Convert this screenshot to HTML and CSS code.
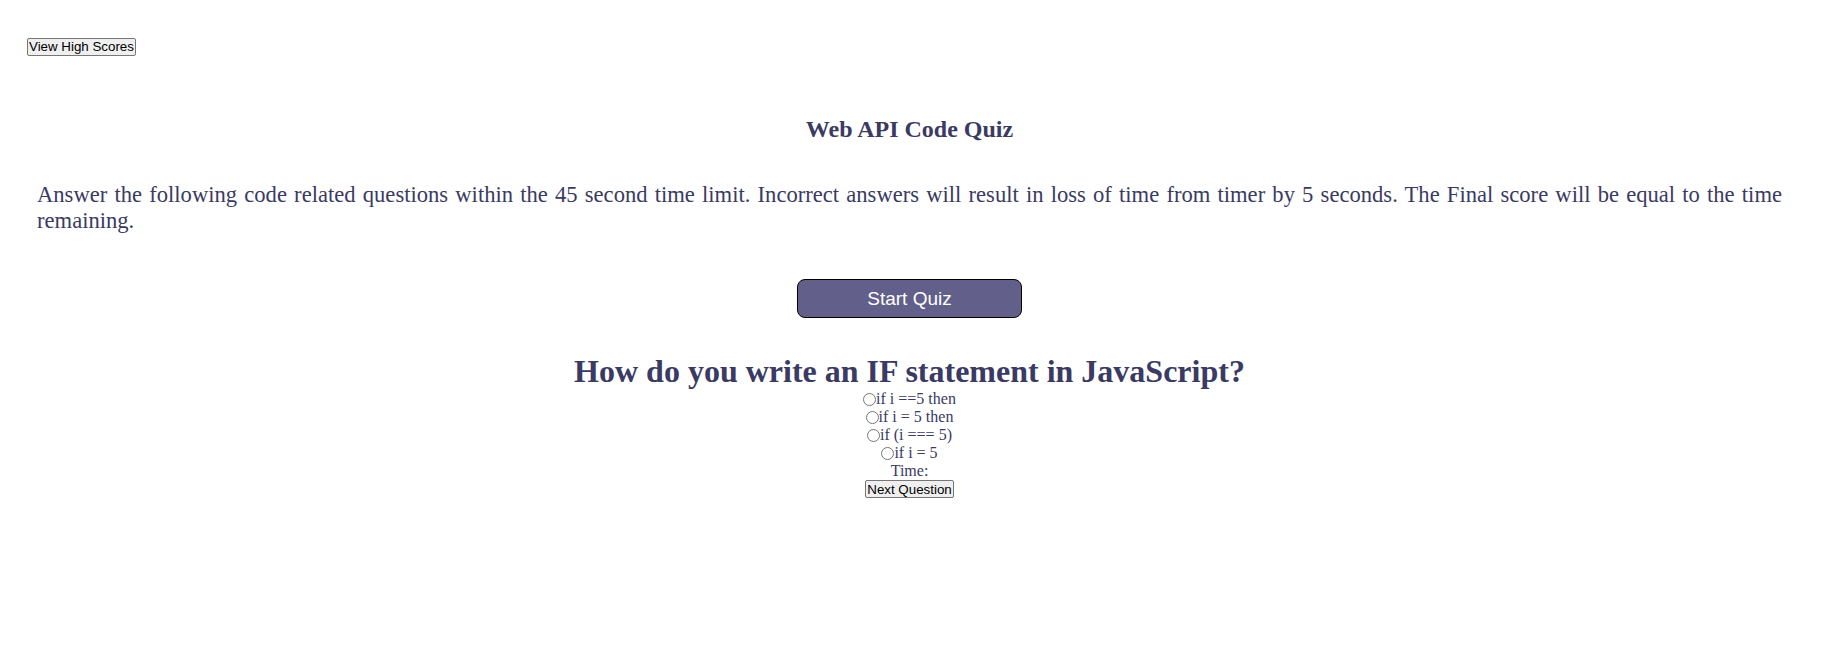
FILE: index.html
```html
<!DOCTYPE html>
<html lang="en">
<head>
<meta charset="utf-8">
<title>Web API Code Quiz</title>
<link rel="stylesheet" href="styles.css">
</head>
<body>
<header class="top">
  <button class="plain-btn">View High Scores</button>
</header>
<main class="page">
  <h2 class="title">Web API Code Quiz</h2>
  <p class="intro">Answer the following code related questions within the 45 second time limit. Incorrect answers will result in loss of time from timer by 5 seconds. The Final score will be equal to the time remaining.</p>
  <div class="start-row">
    <button class="start-btn">Start Quiz</button>
  </div>
  <section class="quiz">
    <h1 class="question">How do you write an IF statement in JavaScript?</h1>
    <div class="option"><input type="radio" name="q" id="a1"><label for="a1">if i ==5 then</label></div>
    <div class="option"><input type="radio" name="q" id="a2"><label for="a2">if i = 5 then</label></div>
    <div class="option"><input type="radio" name="q" id="a3"><label for="a3">if (i === 5)</label></div>
    <div class="option"><input type="radio" name="q" id="a4"><label for="a4">if i = 5</label></div>
    <div class="timer">Time:</div>
    <div class="next-row"><button class="plain-btn">Next Question</button></div>
  </section>
</main>
</body>
</html>
```
FILE: styles.css
```css
html, body {
  margin: 0;
  padding: 0;
  background: #ffffff;
}

body {
  font-family: "Liberation Serif", "Times New Roman", serif;
  color: #3a3a63;
}

.top {
  padding: 37px 0 0 27px;
  height: 18px;
}

.plain-btn {
  font-family: "Liberation Sans", Arial, sans-serif;
  font-size: 13.333px;
  line-height: 15px;
  color: #000000;
  background: #efefef;
  border: 1px solid #767676;
  border-radius: 2px;
  padding: 0 1px;
  height: 18px;
  margin: 0;
  cursor: pointer;
}

.page {
  display: flex;
  flex-direction: column;
  padding: 0 57px 0 37px;
}

.title {
  margin: 60px 0 0;
  text-align: center;
  font-size: 24px;
  line-height: 28px;
  font-weight: bold;
}

.intro {
  margin: 39px 0 0;
  font-size: 22.6px;
  line-height: 26px;
  text-align: justify;
}

.start-row {
  display: flex;
  justify-content: center;
  margin-top: 45px;
}

.start-btn {
  width: 225px;
  height: 39px;
  background: #625f8a;
  color: #ffffff;
  border: 1px solid #000000;
  border-radius: 8px;
  font-family: "Liberation Sans", Arial, sans-serif;
  font-size: 19px;
  padding: 0;
  cursor: pointer;
}

.quiz {
  display: flex;
  flex-direction: column;
  align-items: center;
  margin-top: 35px;
}

.question {
  margin: 0;
  font-size: 32px;
  line-height: 37px;
  font-weight: bold;
  text-align: center;
}

.option {
  font-size: 16px;
  line-height: 18px;
  display: flex;
  align-items: center;
}

.option input {
  margin: 0;
  width: 13px;
  height: 13px;
}

.timer {
  font-size: 16px;
  line-height: 18px;
}

.next-row {
  display: flex;
  justify-content: center;
}
```
